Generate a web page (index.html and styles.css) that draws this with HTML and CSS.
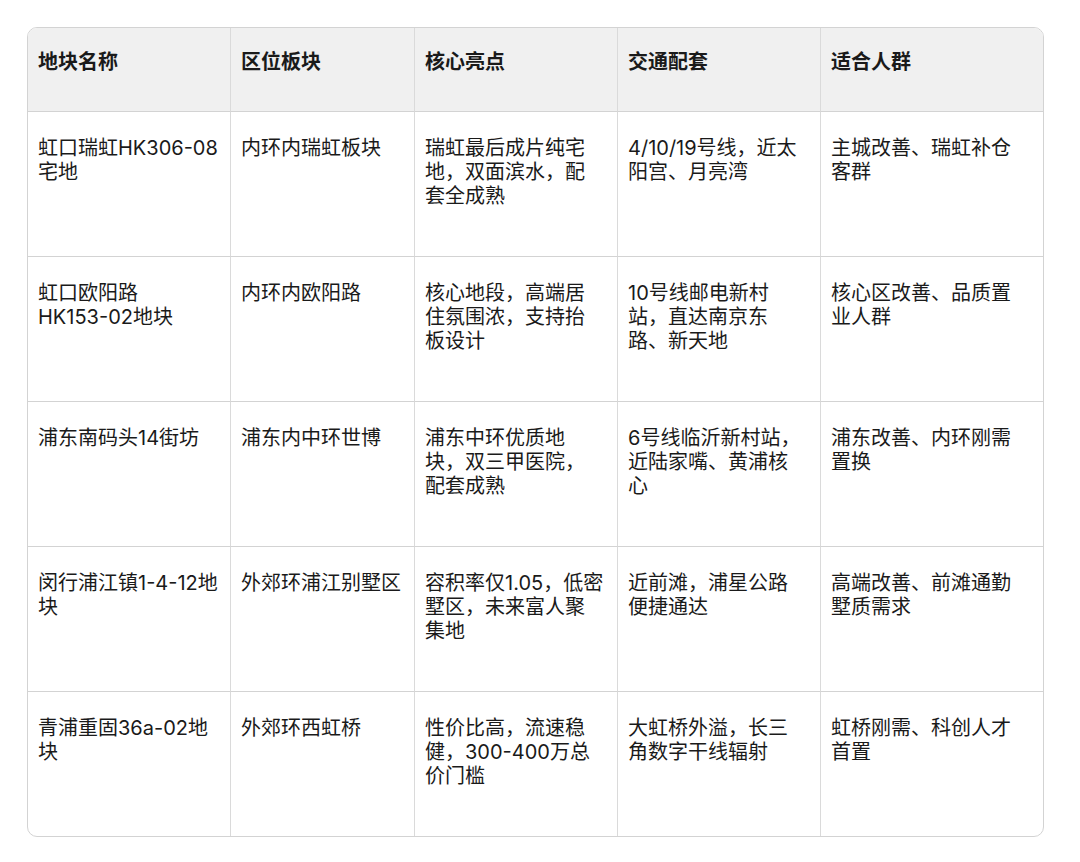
FILE: index.html
```html
<!DOCTYPE html>
<html lang="zh-CN">
<head>
<meta charset="utf-8">
<title>地块对比</title>
<link rel="stylesheet" href="styles.css">
</head>
<body>
<div class="page">
  <div class="table" role="table">
    <div class="cell head">地块名称</div>
    <div class="cell head">区位板块</div>
    <div class="cell head">核心亮点</div>
    <div class="cell head">交通配套</div>
    <div class="cell head">适合人群</div>

    <div class="cell first">虹口瑞虹HK306-08宅地</div>
    <div class="cell">内环内瑞虹板块</div>
    <div class="cell">瑞虹最后成片纯宅地，双面滨水，配套全成熟</div>
    <div class="cell">4/10/19号线，近太阳宫、月亮湾</div>
    <div class="cell">主城改善、瑞虹补仓客群</div>

    <div class="cell first">虹口欧阳路<span class="code">HK153-02</span>地块</div>
    <div class="cell">内环内欧阳路</div>
    <div class="cell">核心地段，高端居住氛围浓，支持抬板设计</div>
    <div class="cell">10号线邮电新村站，直达南京东路、新天地</div>
    <div class="cell">核心区改善、品质置业人群</div>

    <div class="cell first">浦东南码头14街坊</div>
    <div class="cell">浦东内中环世博</div>
    <div class="cell">浦东中环优质地块，双三甲医院，配套成熟</div>
    <div class="cell">6号线临沂新村站，近陆家嘴、黄浦核心</div>
    <div class="cell">浦东改善、内环刚需置换</div>

    <div class="cell first">闵行浦江镇1-4-12地块</div>
    <div class="cell">外郊环浦江别墅区</div>
    <div class="cell">容积率仅1.05，低密墅区，未来富人聚集地</div>
    <div class="cell">近前滩，浦星公路便捷通达</div>
    <div class="cell">高端改善、前滩通勤墅质需求</div>

    <div class="cell first last">青浦重固36a-02地块</div>
    <div class="cell last">外郊环西虹桥</div>
    <div class="cell last">性价比高，流速稳健，300-400万总价门槛</div>
    <div class="cell last">大虹桥外溢，长三角数字干线辐射</div>
    <div class="cell last">虹桥刚需、科创人才首置</div>
  </div>
</div>
</body>
</html>
```

FILE: styles.css
```css
* {
  box-sizing: border-box;
}

html, body {
  margin: 0;
  padding: 0;
  background: #ffffff;
}

body {
  font-family: Inter, "Noto Sans CJK SC", sans-serif;
  font-size: 20px;
  line-height: 24px;
  color: #1a1a1a;
}

.page {
  padding: 27px 0 0 27px;
}

.table {
  display: grid;
  grid-template-columns: 203px 184px 203px 203px 222px;
  grid-template-rows: 84px repeat(4, 145px) 144px;
  width: 1017px;
  border: 1px solid #d3d3d3;
  border-radius: 10px;
  overflow: hidden;
}

.cell {
  padding: 24px 12.5px 0 10px;
  border-right: 1px solid #dadada;
  border-bottom: 1px solid #d3d3d3;
}

.cell:nth-child(5n) {
  border-right: none;
}

.cell.first {
  padding-right: 8px;
}

.cell.last {
  border-bottom: none;
}

.code {
  white-space: nowrap;
}

.head {
  background: #f0f0f0;
  font-weight: 700;
  padding-top: 22px;
}
```
